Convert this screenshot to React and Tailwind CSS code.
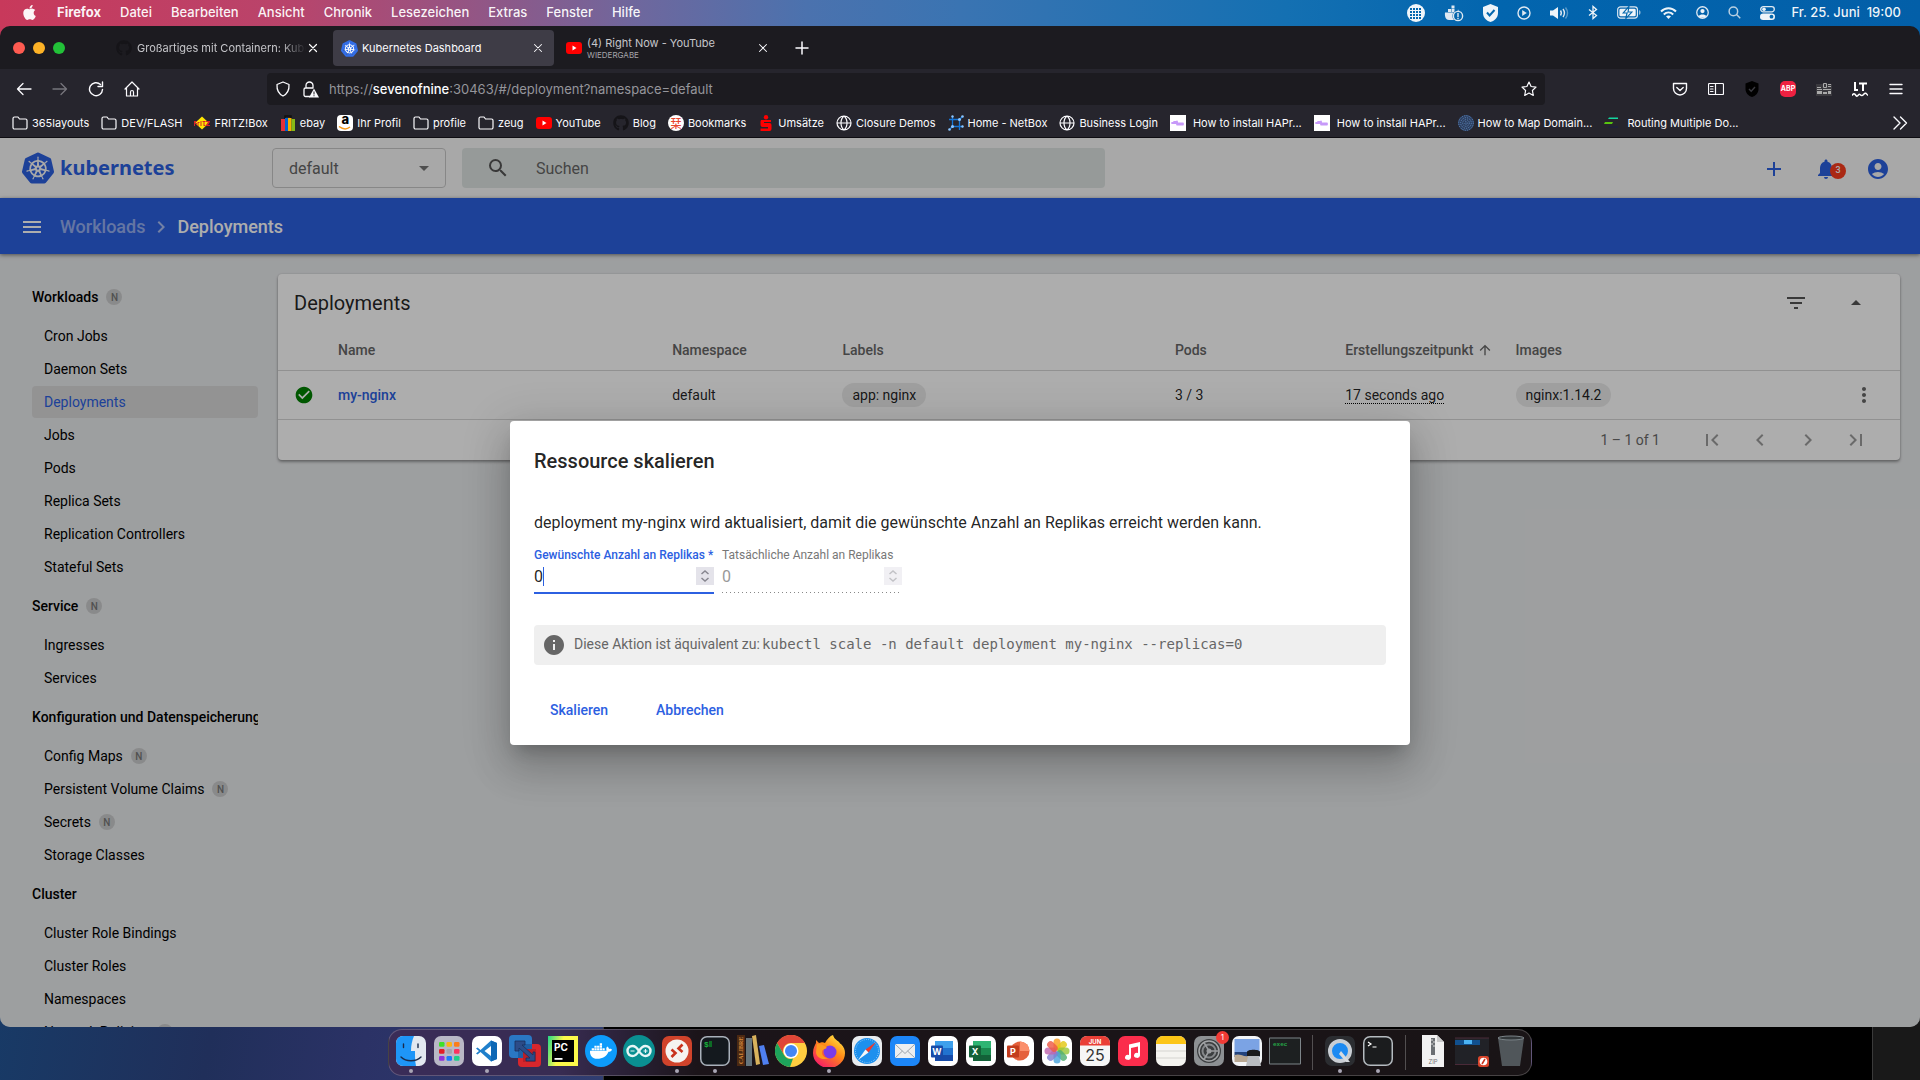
import React from "react";
import {
  MdAccountCircle, MdAdd, MdArrowDropDown, MdArrowDropUp, MdArrowUpward, MdCheckCircle,
  MdChevronLeft, MdChevronRight, MdFilterList, MdFirstPage, MdInfo, MdLastPage, MdMenu,
  MdMoreVert, MdNotifications, MdSearch,
} from "react-icons/md";
import { FaAmazon, FaApple, FaDocker, FaGithub } from "react-icons/fa";
import { SiKubernetes } from "react-icons/si";

/* ---------- macOS menu bar ---------- */

const menus = ["Datei", "Bearbeiten", "Ansicht", "Chronik", "Lesezeichen", "Extras", "Fenster", "Hilfe"];

function MenuBar() {
  return (
    <header className="flex h-[26px] shrink-0 items-center justify-between pb-px pl-[21px] pr-[19px] text-[13px] font-medium text-white/95">
      <nav className="flex items-center gap-[19px]">
        <button aria-label="Apple"><FaApple className="size-[17px]" /></button>
        <button className="font-bold">Firefox</button>
        {menus.map((m) => <button key={m}>{m}</button>)}
      </nav>
      <div className="flex items-center gap-[19px]">
        <svg width="18" height="18" viewBox="0 0 18 18">
          <circle cx="9" cy="9" r="9" fill="#f1f6fa" />
          <g fill="#0467ad">
            {[5, 8, 11, 14].map((y) => [3, 6, 9, 12].map((x) => (
              <rect key={x + "-" + y} x={x} y={y - 1} width="2" height="2" />
            )))}
          </g>
        </svg>
        <svg width="20" height="18" viewBox="0 0 20 18" fill="#dfe9f2">
          <path d="M4 5h3v3H4zM7.500 5h3v3h-3zM7.500 1.500h3v3h-3zM1 8.500h12l1-3 2 2 2 .5-1 1.500-4 6.500H5C2 16 .5 13 1 8.500z" />
          <circle cx="14" cy="12" r="5.600" fill="#0467ad" />
          <circle cx="14" cy="12" r="4.600" fill="none" stroke="#dfe9f2" strokeWidth="1.400" />
          <path d="M13.300 9h1.400v4h-1.400zM13.300 13.800h1.400v1.400h-1.400z" />
        </svg>
        <svg width="15" height="18" viewBox="0 0 15 18"><path d="M7.500 0 15 3v6c0 5-4 8-7.500 9C4 17 0 14 0 9V3z" fill="#eef4f9" /><path d="m4 8.500 2.600 3L11.500 6" fill="none" stroke="#0467ad" strokeWidth="2" /></svg>
        <svg width="14" height="14" viewBox="0 0 14 14"><circle cx="7" cy="7" r="6" fill="none" stroke="#dfe9f2" strokeWidth="1.400" /><path d="m5.200 4 4.600 3-4.600 3z" fill="#dfe9f2" /></svg>
        <svg width="19" height="14" viewBox="0 0 19 14" fill="none" stroke="#dfe9f2" strokeWidth="1.400"><path d="M0 4.500h3L8 1v12L3 9.500H0z" fill="#eef4f9" stroke="none" /><path d="M10.500 4.500c1 1.500 1 3.500 0 5M13 3c1.800 2.500 1.800 5.500 0 8" /><path d="M15.500 1.500c2.600 3.500 2.600 7.500 0 11" opacity=".4" /></svg>
        <svg width="10" height="15" viewBox="0 0 10 15" fill="none" stroke="#eef4f9" strokeWidth="1.300"><path d="M1 4.500 8.500 10.500 5 13.500v-12l3.500 3L1 10.500" /></svg>
        <svg width="24" height="13" viewBox="0 0 25 13"><rect x=".7" y=".7" width="20.600" height="11.600" rx="3" fill="none" stroke="#dfe9f2" strokeWidth="1.200" /><rect x="2.500" y="2.500" width="17" height="8" rx="1.500" fill="#eef4f9" /><path d="M12.500 0 6.500 7h4l-1.500 6 6.500-7h-4z" fill="#eef4f9" stroke="#0467ad" strokeWidth="1.200" /><path d="M23 4v5c1-.5 1.500-1.500 1.500-2.500S24 4.500 23 4z" fill="#9dc0dc" /></svg>
        <svg width="17" height="12" viewBox="0 0 17 12" fill="none" stroke="#eef4f9" strokeWidth="2"><path d="M1 4.500c4.300-4.300 10.700-4.300 15 0M3.800 7.400c2.800-2.600 6.600-2.600 9.400 0" /><path d="M8.500 12 6 9.300c1.500-1.200 3.500-1.200 5 0z" fill="#eef4f9" stroke="none" /></svg>
        <svg width="13" height="13" viewBox="0 0 14 14"><circle cx="7" cy="7" r="6.200" fill="none" stroke="#dfe9f2" strokeWidth="1.400" /><circle cx="7" cy="5.500" r="2.300" fill="#eef4f9" /><path d="M2.800 11c1-2.400 7.400-2.400 8.400 0C9 13 5 13 2.800 11z" fill="#eef4f9" /></svg>
        <svg width="13" height="13" viewBox="0 0 14 14" fill="none" stroke="#b9d0e2" strokeWidth="1.600"><circle cx="5.800" cy="5.800" r="4.600" /><path d="m9.200 9.200 4 4" /></svg>
        <svg width="15" height="14" viewBox="0 0 15 14"><rect x=".7" y=".7" width="13.600" height="5.200" rx="2.600" fill="none" stroke="#dfe9f2" strokeWidth="1.300" /><circle cx="4" cy="3.300" r="1.800" fill="#eef4f9" /><rect x="0" y="7.500" width="15" height="6.500" rx="3.200" fill="#eef4f9" /><circle cx="11.500" cy="10.700" r="1.900" fill="#0467ad" /></svg>
        <time className="-ml-0.5 whitespace-pre">Fr. 25. Juni  19:00</time>
      </div>
    </header>
  );
}

/* ---------- Firefox chrome ---------- */

function Stroke({ d, size = 16, w = "1.3", className = "" }) {
  return (
    <svg width={size} height={size} viewBox="0 0 16 16" fill="none" stroke="currentColor" strokeWidth={w} strokeLinecap="round" strokeLinejoin="round" className={"shrink-0 " + className}>
      <path d={d} />
    </svg>
  );
}
const closePath = "M4 4l8 8M12 4l-8 8";

function YoutubeIcon() {
  return (
    <svg width="16" height="16" viewBox="0 0 16 16" className="shrink-0">
      <rect x="0" y="2" width="16" height="12" rx="3" fill="#f00" /><path d="m6.500 5.500 4 2.500-4 2.500z" fill="#fff" />
    </svg>
  );
}

function KubeIcon() {
  return (
    <span className="relative flex size-[17px] shrink-0 items-center justify-center">
      <span className="absolute size-3 rounded-full bg-white" />
      <SiKubernetes className="relative size-[17px] text-[#326de6]" />
    </span>
  );
}

function TabBar() {
  return (
    <div className="flex h-[43px] items-center bg-[#1c1b20] pl-[13px] text-[#fbfbfe]">
      <div className="flex w-[95px] gap-2">
        <button aria-label="Schließen" className="size-3 rounded-full bg-[#fe5b51]" />
        <button aria-label="Minimieren" className="size-3 rounded-full bg-[#fdb226]" />
        <button aria-label="Vergrößern" className="size-3 rounded-full bg-[#22c138]" />
      </div>
      <div className="flex gap-1 text-[11px]">
        <div className="flex h-9 w-[221px] items-center pt-px pl-2 pr-[9px] text-[#c6c6ca]">
          <FaGithub className="size-4 shrink-0 text-[#151418]" />
          <span className="ml-[5px] min-w-0 flex-1 overflow-hidden whitespace-nowrap [mask-image:linear-gradient(to_right,black_85%,transparent)]">Großartiges mit Containern: Kubernetes</span>
          <button aria-label="Tab schließen"><Stroke d={closePath} size={14} w="1.4" className="text-white" /></button>
        </div>
        <div className="flex h-9 w-[221px] items-center rounded bg-[#3e3c46] pt-px pl-2 pr-[9px]">
          <KubeIcon />
          <span className="ml-1 flex-1 whitespace-nowrap">Kubernetes Dashboard</span>
          <button aria-label="Tab schließen"><Stroke d={closePath} size={14} w="1.2" /></button>
        </div>
        <div className="flex h-9 w-[221px] items-center pt-px pl-2 pr-[9px]">
          <YoutubeIcon />
          <span className="ml-[5px] flex flex-1 flex-col whitespace-nowrap text-[#c6c6ca]">
            <span className="leading-[13px]">(4) Right Now - YouTube</span>
            <span className="text-[8px] leading-[10px] text-[#a5a5aa]">WIEDERGABE</span>
          </span>
          <button aria-label="Tab schließen"><Stroke d={closePath} size={14} w="1.2" /></button>
        </div>
      </div>
      <button aria-label="Neuer Tab" className="ml-[15px]"><Stroke d="M8 2v12M2 8h12" size={16} w="1.5" /></button>
    </div>
  );
}

function NavBar() {
  return (
    <div className="flex h-10 items-center bg-[#26252d] pl-4 pr-4 text-[#fbfbfe]">
      <div className="flex w-[251px] gap-5">
        <button aria-label="Zurück"><Stroke d="M15 8H1.500M7 2.500 1.500 8 7 13.500" /></button>
        <button aria-label="Vor" className="text-[#76757c]"><Stroke d="M1 8h13.500M9 2.500 14.500 8 9 13.500" /></button>
        <button aria-label="Neu laden"><Stroke d="M14.500 8.500A6.500 6.500 0 1 1 12.500 3.500M14.500 1v4.500H10" w="1.4" /></button>
        <button aria-label="Startseite"><Stroke d="M1 8l7-7 7 7M2.500 7v8h11V7M6.500 15v-4a1.500 1.500 0 0 1 3 0v4" w="1.2" /></button>
      </div>
      <div className="flex h-8 flex-1 items-center rounded bg-[#1c1b20] px-2">
        <Stroke d="M8 1l6 2.500c.3 5-1 9-6 11.500C3 12.500 1.700 8.500 2 3.500z" />
        <svg width="17" height="17" viewBox="0 0 17 17" className="ml-[11px]">
          <path d="M4 7V4.500a3.500 3.500 0 0 1 7 0V7M8 15.500H3.500a1.500 1.500 0 0 1-1.500-1.500V8.500A1.500 1.500 0 0 1 3.500 7h8" fill="none" stroke="currentColor" strokeWidth="1.300" />
          <path d="m12 7.500 5 9H7z" fill="currentColor" /><path d="M11.500 10.500h1v3h-1zM11.500 14.300h1v1h-1z" fill="#1c1b20" />
        </svg>
        <div className="ml-[10px] flex-1 pt-0.5 text-[13px]">
          <span className="text-[#95959b]">https://<span className="font-medium text-[#fbfbfe]">sevenofnine</span>:30463/#/deployment?namespace=default</span>
        </div>
        <button aria-label="Lesezeichen hinzufügen"><Stroke d="M8 1l2.100 4.500 4.900.6-3.600 3.400.9 4.900L8 12l-4.300 2.400.9-4.900L1 6.100l4.900-.6z" w="1.2" /></button>
      </div>
      <div className="ml-[127px] flex items-center gap-5">
        <button aria-label="Pocket"><Stroke d="M1.500 2.500h13v5a6.500 6.500 0 0 1-13 0zM4.800 6.500 8 9.500l3.200-3" w="1.4" /></button>
        <button aria-label="Seitenleiste"><Stroke d="M1.500 2.500h13a1 1 0 0 1 1 1v9a1 1 0 0 1-1 1h-13a1 1 0 0 1-1-1v-9a1 1 0 0 1 1-1zM7.500 2.500v11M2.500 5.500H5M2.500 8H5M2.500 10.500H5" w="1.2" /></button>
        <button aria-label="Schutz"><svg width="16" height="16" viewBox="0 0 16 16"><path d="m8 0 6.500 2.500V8c0 4-3 7-6.500 8-3.500-1-6.500-4-6.500-8V2.500z" fill="#000" /><path d="M5 8l2.200 2.300L11 6" fill="none" stroke="#3a3a40" strokeWidth="1.400" /></svg></button>
        <button aria-label="Adblock Plus" className="flex size-4 items-center justify-center rounded-[5px] bg-[#ee2141] text-[7px] font-bold text-white">ABP</button>
        <button aria-label="Erweiterung"><svg width="16" height="16" viewBox="0 0 16 16" fill="#aaa"><rect x="0" y="3" width="16" height="12" fill="#3b3a3f" /><path d="M1 6h4v1H1zM1 8h5v1H1zM1 10h5v3H1z" /><path d="M7.500 2.500h3v4h-3z" fill="none" stroke="#aaa" /><path d="M12 3h3v1h-3zM12 5h3v1h-3zM7 8h8v1H7zM7 11h4v2H7zM12 10h3v3h-3z" /></svg></button>
        <button aria-label="LanguageTool"><svg width="16" height="16" viewBox="0 0 16 16" fill="none" stroke="#fff" strokeWidth="2"><path d="M3 1v8h3M7 2.500h8M11 2.500V10" /><path d="M0 14.500c1.500-2.500 2.500-2.500 4 0s2.500-2.500 4-1 2.500 1.500 4-.5 2.500 0 4 1.500" strokeWidth="1.500" /></svg></button>
        <button aria-label="Menü"><Stroke d="M2 3.500h12M2 8h12M2 12.500h12" w="1.400" /></button>
      </div>
    </div>
  );
}

const Folder = () => <Stroke d="M1 12.500v-9A1.500 1.500 0 0 1 2.500 2H6l1.500 2H13.500A1.500 1.500 0 0 1 15 5.500v7a1.500 1.500 0 0 1-1.500 1.500h-11A1.500 1.500 0 0 1 1 12.500z" w="1.2" />;
const Globe = () => <Stroke d="M8 1a7 7 0 1 0 0 14A7 7 0 1 0 8 1M1 8h14M8 1C4 4 4 12 8 15M8 1c4 3 4 11 0 14" w="1.200" />;
const Box16 = ({ children }) => <svg width="16" height="16" viewBox="0 0 16 16" className="shrink-0">{children}</svg>;
const Fritz = () => <Box16><path d="M8 1.500 15 8l-7 6.500L1 8z" fill="#fee600" /><path d="M0 6h3v1H1v1h2v1H1v2H0zM3.500 7h2v1h-1v3h-1zM6.500 6h1v5h-1zM8.500 6h3v1h-1v3h1v1h-2V7h-1zM12 6h4v1l-2 3h2v1h-4v-1l2-3h-2z" fill="#d5232b" /></Box16>;
const Ebay = () => <Box16><path d="M5 4V1h6v3" fill="none" stroke="#111" strokeWidth="1.500" /><path d="M1 4h4v12H1z" fill="#e53238" /><path d="M5 3h3v13H5z" fill="#0064d2" /><path d="M8 3h3.500v13H8z" fill="#f5af02" /><path d="M11.500 4H15v12h-3.500z" fill="#86b817" /></Box16>;
const Amazon = () => (
  <span className="flex size-4 shrink-0 flex-col items-center rounded-sm bg-white">
    <span className="h-[11px] text-[13px] leading-[9px] font-extrabold text-black">a</span>
    <svg width="14" height="4" viewBox="0 0 14 4" fill="none" stroke="#f79b1c" strokeWidth="1.500"><path d="M1 .5c4 3 8 3 11 .5" /></svg>
  </span>
);
const Stamp = () => <span className="flex size-4 shrink-0 items-center justify-center rounded-full bg-white font-['Noto_Sans_CJK_JP',sans-serif] text-[11px] leading-none font-medium text-[#e8442c]">栞</span>;
const Sparkasse = () => <Box16><circle cx="8" cy="2.200" r="2.200" fill="#f00" /><path d="M3 5h10v2H6v1h5.500A2 2 0 0 1 13.500 10v4a2 2 0 0 1-2 2H2.500v-2.500H10V12H4.500a2 2 0 0 1-2-2V6.500z" fill="#f00" /></Box16>;
const Netbox = () => <Box16><g stroke="#1476d8" strokeWidth="1.300" fill="none"><path d="M4.500 1v10.500M11.500 4.500V15M1 4.500h10.500M4.500 11.500H15M11.500 4.500l3-3M4.500 11.500l-3 3" /></g><g fill="#8cc6ff"><circle cx="4.500" cy="1.500" r="1.200" /><circle cx="4.500" cy="11.500" r="1.500" /><circle cx="11.500" cy="4.500" r="1.500" /><circle cx="14.500" cy="1.500" r="1.300" /><circle cx="1.500" cy="14.500" r="1.300" /><circle cx="14.500" cy="11.500" r="1.200" /></g></Box16>;
const Haproxy = () => <Box16><path d="M0 0h16v16H0z" fill="#fff" /><path d="M2 8h5V6.500M4 7h3M7 9.500h6M8 8.500h5" stroke="#c79af9" strokeWidth="1.800" fill="none" strokeLinecap="round" /></Box16>;
const Dots = () => <Box16><circle cx="8" cy="8" r="8" fill="#2c3d5c" /><g fill="none" stroke="#5b86bd" strokeDasharray="1.300 1"><circle cx="8" cy="8" r="7.300" /><circle cx="8" cy="8" r="5.300" /><circle cx="8" cy="8" r="3.300" /><circle cx="8" cy="8" r="1.300" /></g></Box16>;
const Routing = () => <Box16><path d="M5 2.500h9v1.600H4z" fill="#14d5a0" /><path d="M1 7h8l-1 2H0z" fill="#58c410" /><path d="M5 11.500h9v1H4z" fill="#182048" /></Box16>;

const bookmarks = [
  [Folder, "365layouts"], [Folder, "DEV/FLASH"], [Fritz, "FRITZ!Box"], [Ebay, "ebay"], [Amazon, "Ihr Profil"],
  [Folder, "profile"], [Folder, "zeug"], [YoutubeIcon, "YouTube"],
  [() => <FaGithub className="size-4 shrink-0 text-[#151418]" />, "Blog"],
  [Stamp, "Bookmarks"], [Sparkasse, "Umsätze"], [Globe, "Closure Demos"], [Netbox, "Home - NetBox"], [Globe, "Business Login"],
  [Haproxy, "How to install HAPr...", true], [Haproxy, "How to install HAPr...", true], [Dots, "How to Map Domain..."], [Routing, "Routing Multiple Do...", true],
];

function BookmarkBar() {
  return (
    <div className="flex h-[29px] items-center justify-between border-b border-[#0e0d12] bg-[#26252d] pl-3 pr-3 text-[11px] text-[#fbfbfe]">
      <div className="flex items-center gap-3 whitespace-nowrap">
        {bookmarks.map(([Icon, label, wide], i) => (
          <a key={i} href="#bookmark" className={"flex items-center " + (wide ? "gap-[7px]" : "gap-1")}><Icon />{label}</a>
        ))}
      </div>
      <button aria-label="Weitere Lesezeichen"><Stroke d="M2 2l6 6-6 6M8.500 2l6 6-6 6" w="1.400" /></button>
    </div>
  );
}

/* ---------- Kubernetes dashboard ---------- */

function DashboardHeader() {
  return (
    <header className="flex h-[60px] shrink-0 items-center bg-[#f8f8f8] pl-[22px] pr-[30px]">
      <a href="#/overview" className="flex w-[250px] items-center gap-1.5 text-[#2c60e1]">
        <SiKubernetes className="size-8" />
        <span className="font-['Noto_Sans',sans-serif] text-[20px] leading-6 font-bold">kubernetes</span>
      </a>
      <div className="relative">
        <select aria-label="Namespace" defaultValue="default" className="h-10 w-[174px] appearance-none rounded-sm border border-[#c8c8c8] pt-px pl-4 text-[16px] text-[#666]">
          <option>default</option>
        </select>
        <MdArrowDropDown className="pointer-events-none absolute right-2.5 top-2 size-6 text-[#757575]" />
      </div>
      <label className="ml-4 flex h-10 w-[643px] items-center rounded-sm bg-[#dee4e2] pl-6">
        <MdSearch className="size-6 text-[#555]" />
        <input placeholder="Suchen" aria-label="Suchen" className="ml-[26px] flex-1 bg-transparent pt-0.5 text-[16px] outline-none placeholder:text-[#666]" />
      </label>
      <div className="ml-auto flex items-center pt-px text-[#2c60e1]">
        <button aria-label="Erstellen"><MdAdd className="size-6" /></button>
        <button aria-label="Benachrichtigungen" className="relative ml-7">
          <MdNotifications className="size-6" />
          <span className="absolute left-4 top-1.5 flex size-4 items-center justify-center rounded-full bg-[#fb3c1c] text-[9px] font-medium text-white">3</span>
        </button>
        <button aria-label="Konto" className="ml-7"><MdAccountCircle className="size-6" /></button>
      </div>
    </header>
  );
}

function Breadcrumbs() {
  return (
    <nav className="relative flex h-14 shrink-0 items-center bg-[#2c60e1] pt-px pl-5 text-[18px] text-white shadow-[0_1px_4px_rgba(0,0,0,0.5)]">
      <button aria-label="Navigation"><MdMenu className="size-6" /></button>
      <a href="#/workloads" className="ml-4 font-medium text-white/50">Workloads</a>
      <MdChevronRight className="mx-1 size-6 text-white/60" />
      <span className="font-medium">Deployments</span>
    </nav>
  );
}

const groups = [
  ["Workloads", true, [["Cron Jobs"], ["Daemon Sets"], ["Deployments"], ["Jobs"], ["Pods"], ["Replica Sets"], ["Replication Controllers"], ["Stateful Sets"]]],
  ["Service", true, [["Ingresses"], ["Services"]]],
  ["Konfiguration und Datenspeicherung", false, [["Config Maps", true], ["Persistent Volume Claims", true], ["Secrets", true], ["Storage Classes"]]],
  ["Cluster", false, [["Cluster Role Bindings"], ["Cluster Roles"], ["Namespaces"], ["Network Policies", true]]],
];

const NamespacedBadge = () => (
  <span className="flex size-4 shrink-0 items-center justify-center rounded-full bg-[#cbcccd] text-[10px] font-medium text-[#777]">N</span>
);

function Sidebar() {
  return (
    <nav className="w-[258px] shrink-0 overflow-hidden pl-8 pt-5 text-[14px] text-black">
      {groups.map(([title, badge, items]) => (
        <section key={title}>
          <a href="#/group" className="flex h-[45px] items-center gap-2 overflow-hidden pt-px font-medium whitespace-nowrap">{title}{badge && <NamespacedBadge />}</a>
          {items.map(([label, ns]) => (
            <a key={label} href="#/item" className={"mt-px flex h-8 items-center gap-2 rounded-sm pl-3 whitespace-nowrap " + (label === "Deployments" ? "bg-[#d9d9d9] text-[#2c60e1]" : "")}>
              {label}{ns && <NamespacedBadge />}
            </a>
          ))}
        </section>
      ))}
    </nav>
  );
}

function DeploymentsCard() {
  return (
    <section className="flex-1 self-start rounded-sm bg-white shadow-[0_2px_3px_rgba(0,0,0,0.35),0_0_2px_rgba(0,0,0,0.15)]">
      <div className="flex h-14 items-center pt-px pl-4 pr-8 text-[#555]">
        <h2 className="flex-1 text-[20px] text-black/87">Deployments</h2>
        <button aria-label="Filter"><MdFilterList className="size-6" /></button>
        <button aria-label="Einklappen" className="ml-9"><MdArrowDropUp className="size-6" /></button>
      </div>
      <table className="w-full table-fixed text-left text-[14px] text-black/87">
        <colgroup>
          <col className="w-[60px]" /><col className="w-[20.6%]" /><col className="w-[10.5%]" /><col className="w-[20.5%]" />
          <col className="w-[10.5%]" /><col className="w-[10.5%]" /><col /><col className="w-12" />
        </colgroup>
        <thead>
          <tr className="h-10 border-b border-[#d6d6d6] text-[#666] *:pt-px">
            <th /><th className="font-medium">Name</th><th className="font-medium">Namespace</th><th className="font-medium">Labels</th>
            <th className="font-medium">Pods</th>
            <th className="font-medium"><span className="flex items-center gap-1 whitespace-nowrap">Erstellungszeitpunkt<MdArrowUpward className="size-4" /></span></th>
            <th className="font-medium">Images</th><th />
          </tr>
        </thead>
        <tbody>
          <tr className="h-[49px] border-b border-[#d6d6d6] *:pt-px">
            <td className="pl-4"><MdCheckCircle className="size-5 text-[#008100]" /></td>
            <td><a href="#/deployment/my-nginx" className="font-medium text-[#2c60e1]">my-nginx</a></td>
            <td>default</td>
            <td><span className="inline-flex h-6 items-center rounded-full bg-[#ebebeb] px-2.5">app: nginx</span></td>
            <td>3 / 3</td>
            <td><span className="border-b border-dotted border-black">17 seconds ago</span></td>
            <td><span className="inline-flex h-6 items-center rounded-full bg-[#ebebeb] px-2.5">nginx:1.14.2</span></td>
            <td><button aria-label="Aktionen" className="flex"><MdMoreVert className="size-6 text-[#666]" /></button></td>
          </tr>
        </tbody>
      </table>
      <div className="flex h-10 items-center justify-end gap-6 pt-px pr-8 text-[14px] text-[#6a6a6a]">
        <span className="mr-4">1 – 1 of 1</span>
        <button aria-label="Erste Seite"><MdFirstPage className="size-6 text-[#9c9c9c]" /></button>
        <button aria-label="Vorherige Seite"><MdChevronLeft className="size-6 text-[#9c9c9c]" /></button>
        <button aria-label="Nächste Seite"><MdChevronRight className="size-6 text-[#9c9c9c]" /></button>
        <button aria-label="Letzte Seite"><MdLastPage className="size-6 text-[#9c9c9c]" /></button>
      </div>
    </section>
  );
}

function Spinner({ dim }) {
  return (
    <span className={"absolute right-0 top-0 flex size-[18px] items-center justify-center bg-[#e4e3ea] text-[#87868f] " + (dim ? "opacity-50" : "")}>
      <svg width="10" height="14" viewBox="0 0 10 14" fill="none" stroke="currentColor" strokeWidth="1.500"><path d="m1.500 5 3.500-3 3.500 3M1.500 9l3.500 3 3.500-3" /></svg>
    </span>
  );
}

function ScaleDialog() {
  return (
    <div className="absolute inset-0 flex items-center justify-center bg-black/32">
      <div role="dialog" aria-label="Ressource skalieren" className="w-[900px] rounded bg-white px-6 pt-6 pb-4 shadow-[0_11px_15px_-7px_rgba(0,0,0,0.2),0_24px_38px_3px_rgba(0,0,0,0.14),0_9px_46px_8px_rgba(0,0,0,0.12)]">
        <h1 className="text-[20px] leading-8 font-medium text-black/87">Ressource skalieren</h1>
        <p className="mt-8 text-[16px] leading-7 text-black/87">deployment my-nginx wird aktualisiert, damit die gewünschte Anzahl an Replikas erreicht werden kann.</p>
        <div className="mt-2.5 flex gap-2">
          <div className="w-[180px] border-b-2 border-[#2c60e1]">
            <label htmlFor="desired" className="block text-[12px] leading-4 font-medium whitespace-nowrap text-[#2c60e1]">Gewünschte Anzahl an Replikas *</label>
            <div className="relative mt-1 pb-[5px]">
              <input id="desired" type="number" defaultValue="0" className="block w-full text-[16px] leading-5 text-black/87 outline-none [appearance:textfield]" />
              <span className="absolute left-[9px] top-0 h-[19px] w-px bg-[#2c60e1]" />
              <Spinner />
            </div>
          </div>
          <div className="w-[180px]">
            <label htmlFor="actual" className="block text-[12px] leading-4 whitespace-nowrap text-[#777]">Tatsächliche Anzahl an Replikas</label>
            <div className="relative mt-1 pb-[5px]">
              <input id="actual" type="number" disabled defaultValue="0" className="block w-full text-[16px] leading-5 text-[#999] outline-none [appearance:textfield]" />
              <Spinner dim />
            </div>
            <div className="mr-0.5 h-px bg-[repeating-linear-gradient(to_right,#888_0,#888_1px,transparent_1px,transparent_4px)]" />
          </div>
        </div>
        <div className="mt-[31px] flex h-10 items-center rounded-sm bg-[#efefef] pl-2 text-[14px] text-[#666]">
          <MdInfo className="mr-2 size-6 shrink-0" />
          <span>Diese Aktion ist äquivalent zu:</span>
          <code className="ml-0.5 font-['DejaVu_Sans_Mono',monospace]">kubectl scale -n default deployment my-nginx --replicas=0</code>
        </div>
        <div className="mt-7 flex h-9 gap-4 text-[14px] font-medium text-[#2c60e1]">
          <button className="px-4">Skalieren</button>
          <button className="px-4">Abbrechen</button>
        </div>
      </div>
    </div>
  );
}

/* ---------- Dock ---------- */

function Tile({ fill, children, size = 32 }) {
  return (
    <svg width={size} height={size} viewBox="0 0 32 32" className="shrink-0">
      {fill && <rect x="1" y="1" width="30" height="30" rx="7" fill={fill} />}
      {children}
    </svg>
  );
}

const Finder = () => (
  <Tile fill="#e3e8f0">
    <path d="M8 1h11c-2 5-3 9-3 15h4c0 6 0 10 1 15H8a7 7 0 0 1-7-7V8a7 7 0 0 1 7-7z" fill="#1e96f8" />
    <path d="M8.500 9v3.500M23 9v3.500M6 22c5 5 15 5 20 0" stroke="#1b2b4a" strokeWidth="1.400" fill="none" strokeLinecap="round" />
  </Tile>
);
const Launchpad = () => (
  <Tile fill="#b9b8c6">
    {["#3ee02a", "#fbb414", "#fb7d1a", "#e31e25", "#a4a4ae", "#fb3460", "#9132d8", "#1a7bfb", "#1fd08a"].map((c, i) => (
      <rect key={c} x={6 + (i % 3) * 7.500} y={7 + Math.floor(i / 3) * 7} width="5.500" height="4.800" rx="1.200" fill={c} />
    ))}
  </Tile>
);
const Code = () => (
  <Tile fill="#fff"><path d="M20 5.500 26 8v16l-6 2.500L9.500 17 6.500 19.500 5 18.500 8 16 5 13.500l1.500-1L9.500 15zM20 11l-6.500 5 6.500 5z" fill="#1f7fcb" fillRule="evenodd" /><path d="M20 5.500 26 8v16l-6 2.500z" fill="#0e68b5" /></Tile>
);
const Fusion = () => (
  <Tile>
    <rect x="0" y="0" width="23" height="23" rx="4" fill="#2a78c4" />
    <path d="M9 13a4 4 0 0 1 4-4h15a4 4 0 0 1 4 4v15a4 4 0 0 1-4 4H13a4 4 0 0 1-4-4z" fill="#d8262c" />
    <path d="M9 23V13a4 4 0 0 1 4-4h10v5h-9v9z" fill="#1f5fa5" />
    <path d="M14 14h13v13H14z" fill="#b81f28" />
    <path d="M6 6h10v4h-3l11 10v-3h2v9h-9v-3h4L10 13v3H6z" fill="#2c4c88" stroke="#1b2f5c" strokeWidth=".8" />
  </Tile>
);
const PyCharm = () => (
  <Tile><defs><linearGradient id="pc" x2="1" y2=".3"><stop stopColor="#21d789" /><stop offset=".5" stopColor="#fcf84a" /></linearGradient></defs>
    <path d="M1 1h30v30H1z" fill="url(#pc)" /><path d="M5 5h22v22H5z" fill="#000" /><path d="M7.500 23h8v1.800h-8z" fill="#fff" />
    <text x="7" y="16" fontSize="10" fontWeight="700" fill="#fff" fontFamily="Inter">PC</text></Tile>
);
const Docker = () => <span className="flex size-8 items-center justify-center rounded-full bg-[#0d9bfb] text-white"><FaDocker className="size-[22px]" /></span>;
const Arduino = () => <Tile><circle cx="16" cy="16" r="16" fill="#0a8f91" /><path d="M16 16c-3-5-5-5-6.500-5a5 5 0 0 0 0 10c1.500 0 3.500 0 6.500-5s5-5 6.500-5a5 5 0 0 1 0 10c-1.500 0-3.500 0-6.500-5z" fill="none" stroke="#e8f6f6" strokeWidth="2.400" /><path d="M7.500 16h4M20.500 16h4M22.500 14v4" stroke="#e8f6f6" strokeWidth="1.200" /></Tile>;
const Remote = () => <Tile fill="#d0432b"><circle cx="16" cy="16" r="11.500" fill="#f5f3f0" /><path d="m10.500 14.500 4 3.500-4 4M21.500 9.500l-4 4 4 3.500" fill="none" stroke="#c9331d" strokeWidth="2.600" /></Tile>;
const ITerm = () => <Tile fill="#a9b1ba"><rect x="2.500" y="2.500" width="27" height="27" rx="5.500" fill="#14191e" /><text x="5" y="12" fontSize="8" fontWeight="700" fill="#19b23b" fontFamily="Liberation Mono">$</text><path d="M10 6h3v6h-3z" fill="#0d6b25" /></Tile>;
const Calibre = () => (
  <Tile><path d="M0 0h8v31H0z" fill="#4b2812" /><path d="M9 3h6v28H9z" fill="#66757d" /><path d="m15 1 4-1 4 29-4 1z" fill="#d9b25c" /><path d="m22 11 5-1 5 19-6 1z" fill="#4f7ff0" />
    <text transform="rotate(-90 6 29)" x="6" y="29" fontSize="6" fontWeight="700" fill="#d98a3c" fontFamily="Liberation Serif">CALIBRE</text></Tile>
);
const Chrome = () => (
  <Tile><circle cx="16" cy="16" r="16" fill="#ffcd40" /><path d="M2.100 8A16 16 0 0 1 29.900 8H16a8 8 0 0 0-7 12z" fill="#df4637" /><path d="M2.100 8 9 20a8 8 0 0 0 9 3.500L15 32A16 16 0 0 1 2.100 8z" fill="#1da35b" /><circle cx="16" cy="16" r="7.500" fill="#fff" /><circle cx="16" cy="16" r="6" fill="#4286f5" /></Tile>
);
const Firefox = () => (
  <Tile><defs><linearGradient id="ff" x1=".9" x2=".2" y2="1"><stop stopColor="#fff24a" /><stop offset=".45" stopColor="#ff8a16" /><stop offset="1" stopColor="#f5156c" /></linearGradient></defs>
    <path d="M20 0c1 4 4 5 6 7 1 1 1 2 2 2 3 3 4 6 4 9a16 15 0 0 1-32 0c0-5 2-8 3-10V5l3 3c3-1 4-1 6 0 2-4 5-7 8-8z" fill="url(#ff)" /><circle cx="17" cy="17" r="6.500" fill="#7a3be8" /><path d="M4 9c5 0 8 2 10 4-2 1-5 1-5 4 0 4 3 6 7 6-7 3-13-1-13-6z" fill="#ff9a1f" /></Tile>
);
const Safari = () => <Tile fill="#e9ecef"><circle cx="16" cy="16" r="13" fill="#1d90ee" /><circle cx="16" cy="16" r="11.500" fill="none" stroke="#b9e0fb" strokeDasharray=".7 1.500" /><path d="m25 7-7.500 10.500-3-3z" fill="#f0392b" /><path d="m7 25 7.500-10.500 3 3z" fill="#f5f7f9" /></Tile>;
const Mail = () => <Tile fill="#1c86f8"><rect x="6" y="9" width="20" height="14" rx="1.500" fill="#eceef0" /><path d="m6.500 9.500 9.500 9 9.500-9M6.500 22.500l7-6.500M25.500 22.500l-7-6.500" fill="none" stroke="#9fa6ad" /></Tile>;
function Office({ light, mid, dark, letter, round }) {
  return (
    <Tile fill="#fff">
      {round ? <><circle cx="17" cy="16" r="9.500" fill={mid} /><path d="M17 6.500A9.500 9.500 0 0 1 26.500 16H17z" fill={light} /></> : <><path d="M8 6h18v7H8z" fill={light} /><path d="M8 13h18v7H8z" fill={mid} /><path d="M8 20h18v6H8z" fill={dark} /></>}
      <rect x="4" y="10.500" width="12" height="12" rx="1" fill={dark} />
      <text x="10" y="19.500" textAnchor="middle" fontSize="9" fontWeight="700" fill="#fff" fontFamily="Inter">{letter}</text>
    </Tile>
  );
}
const Photos = () => (
  <Tile fill="#fff">
    {["#fb9d1e", "#e3c814", "#9ac73b", "#4fae72", "#4aa3dc", "#7f7ed2", "#c065ae", "#ee5a45"].map((c, i) => (
      <rect key={c} x="12.500" y="3.500" width="7" height="12" rx="3.500" fill={c} fillOpacity=".82" transform={`rotate(${i * 45} 16 16)`} />
    ))}
  </Tile>
);
const Calendar = () => <Tile fill="#f6f6f6"><path d="M1 10.500V8a7 7 0 0 1 7-7h16a7 7 0 0 1 7 7v2.500z" fill="#ea3f37" /><text x="16" y="8.500" textAnchor="middle" fontSize="6" fontWeight="700" fill="#fff" fontFamily="Inter">JUN</text><text x="16" y="26" textAnchor="middle" fontSize="16" fill="#333" fontFamily="Inter">25</text></Tile>;
const Music = () => <Tile fill="#fb2d4c"><path d="M12 9.500 23 7v13.500a3 2.500 0 1 1-2-2.500v-6.500l-7 1.500v9.500a3 2.500 0 1 1-2-2.500z" fill="#fff" /></Tile>;
const Notes = () => <Tile fill="#f5f4f0"><path d="M1 9V8a7 7 0 0 1 7-7h16a7 7 0 0 1 7 7v1z" fill="#fcc516" /><path d="M1 16h30M1 23h30" stroke="#d5d4d0" /></Tile>;
const Settings = () => (
  <span className="relative flex">
    <Tile fill="#8d9093"><circle cx="16" cy="16" r="12" fill="#3c3e40" /><circle cx="16" cy="16" r="10" fill="none" stroke="#a5a7a9" strokeWidth="1.500" /><circle cx="16" cy="16" r="6.500" fill="none" stroke="#85878a" strokeWidth="2" /><circle cx="16" cy="16" r="2.500" fill="#9a9c9f" /><path d="M16 16h10M16 16l-5 8.500M16 16l-5-8.500" stroke="#9a9c9f" strokeWidth="1.500" /></Tile>
    <span className="absolute -right-1 -top-1 flex size-[13px] items-center justify-center rounded-full bg-[#f13a35] text-[8px] text-white">1</span>
  </span>
);
const Preview = () => <Tile fill="#f3f5f8"><path d="M3.500 4h25v13h-25z" fill="#7ba3e4" /><path d="M3.500 17h25v5h-25z" fill="#24437c" /><path d="M3.500 20c6-2 8 2 14 1v6h-14z" fill="#b9a893" /><path d="M16 17c0-3 13-3 13 0v4H16z" fill="#1b1b1d" /><path d="M17 21h11l2 10H15z" fill="#b9bcc0" /></Tile>;
const Exec = () => <Tile><rect x="0" y="2.500" width="32" height="27" rx="1" fill="#7d8489" /><rect x="1" y="3.500" width="30" height="25" fill="#1d2021" /><text x="4" y="11" fontSize="6" fontWeight="700" fill="#25a447" fontFamily="Liberation Mono">exec</text></Tile>;
const QuickTime = () => <Tile fill="#2b2d31"><circle cx="16" cy="16" r="10" fill="#1c8af2" stroke="#c9ced4" strokeWidth="4" /><path d="m17 16 9 11h-4l-7-8z" fill="#d6dade" /></Tile>;
const Terminal = () => <Tile fill="#b5bbc0"><rect x="2.500" y="2.500" width="27" height="27" rx="5.500" fill="#1b1c1e" /><path d="m6 7 3 2-3 2M10.500 12h4" stroke="#fff" fill="none" strokeWidth="1.200" /></Tile>;
const Zip = () => <Tile><path d="M5 0h15l7 7v25H5z" fill="#f2f2f2" /><path d="M20 0v7h7z" fill="#c9c9c9" /><path d="M14 3h4v17h-4z" fill="#6b6f73" /><path d="M14 5h2M16 7h2M14 9h2M16 11h2" stroke="#ddd" /><text x="16" y="29" textAnchor="middle" fontSize="6" fill="#777" fontFamily="Inter">ZIP</text></Tile>;
const Minimized = () => <svg width="34" height="32" viewBox="0 0 34 32"><path d="M0 3h34v27H0z" fill="#212227" /><path d="M0 2.500h34v1H0zM0 29h34v1H0z" fill="#4a2a38" /><path d="M0 5h25v5H0z" fill="#11508e" /><path d="M9 5h8v4H9z" fill="#4bb4f5" /><rect x="23" y="21" width="11" height="11" rx="2.500" fill="#d9452b" /><circle cx="28.500" cy="26.500" r="3.800" fill="#fff" /><path d="m27 29 3-5" stroke="#c9331d" strokeWidth="1.500" /></svg>;
const Trash = () => <Tile><path d="M3 3h26l-4 28H7z" fill="#5b6266" fillOpacity=".85" /><ellipse cx="16" cy="3" rx="13" ry="2" fill="#32373a" stroke="#7b8388" /></Tile>;

const dock = [
  ["Finder", Finder, 1], ["Launchpad", Launchpad], ["Visual Studio Code", Code, 1], ["VMware Fusion", Fusion], ["PyCharm", PyCharm], ["Docker", Docker],
  ["Arduino", Arduino], ["Remote Desktop", Remote, 1], ["iTerm", ITerm, 1], ["calibre", Calibre], ["Chrome", Chrome], ["Firefox", Firefox, 1],
  ["Safari", Safari], ["Mail", Mail],
  ["Word", () => <Office letter="W" light="#3ea0ec" mid="#2273cf" dark="#174ba8" />],
  ["Excel", () => <Office letter="X" light="#2fb573" mid="#1b8a4f" dark="#136138" />],
  ["PowerPoint", () => <Office letter="P" round light="#fb8f6b" mid="#e5613c" dark="#c33c1c" />],
  ["Fotos", Photos], ["Kalender", Calendar], ["Musik", Music], ["Notizen", Notes], ["Systemeinstellungen", Settings], ["Vorschau", Preview], ["exec", Exec], null,
  ["QuickTime", QuickTime, 1], ["Terminal", Terminal, 1], null, ["Archiv", Zip], ["Fenster", Minimized], ["Papierkorb", Trash],
];

function Dock() {
  return (
    <footer className="relative -mt-4 flex h-[69px] shrink-0 justify-center pt-[18px]">
      <div className="absolute inset-0 flex">
        <div className="w-[31.4%] bg-[linear-gradient(100deg,#183a66_0%,#202f5a_35%,#2b3266_60%,#303d70_100%)]" />
        <div className="flex-1 border-x border-[#3a3a3a] bg-black" />
        <div className="w-[47px] bg-[#191919]" />
      </div>
      <div className="relative flex h-[47px] items-center gap-1.5 self-start rounded-[14px] border border-white/20 bg-[linear-gradient(to_right,#3a2c58_0%,#382c52_15%,#1b1419_27%,#191416_100%)] pl-1.5 pr-1">
        {dock.map((item, i) => {
          if (!item) return <span key={i} className="mx-[5px] h-[35px] w-px bg-white/25" />;
          const [name, Icon, running] = item;
          return (
            <button key={name} aria-label={name} className="relative flex h-full items-center pb-1">
              <Icon />
              {running && <span className="absolute bottom-0.5 left-1/2 size-1 -translate-x-1/2 rounded-full bg-[#a9a6b5]" />}
            </button>
          );
        })}
      </div>
    </footer>
  );
}

export default function App() {
  return (
    <div className="flex h-screen flex-col overflow-hidden bg-[linear-gradient(90deg,#c8395b_0%,#b9446b_15%,#8e5888_26%,#6f679d_33%,#4b72ae_42%,#3a74b2_50%,#1470b2_67%,#0265ae_78%,#035fa8_100%)] font-['Inter',sans-serif]">
      <MenuBar />
      <main className="relative z-10 flex min-h-0 flex-1 flex-col overflow-hidden rounded-[10px]">
        <TabBar />
        <NavBar />
        <BookmarkBar />
        <div className="relative flex min-h-0 flex-1 flex-col bg-[#e8eaec] font-['Roboto',sans-serif]">
          <DashboardHeader />
          <Breadcrumbs />
          <div className="flex min-h-0 flex-1">
            <Sidebar />
            <div className="flex flex-1 px-5 pt-5"><DeploymentsCard /></div>
          </div>
          <ScaleDialog />
        </div>
      </main>
      <Dock />
    </div>
  );
}
